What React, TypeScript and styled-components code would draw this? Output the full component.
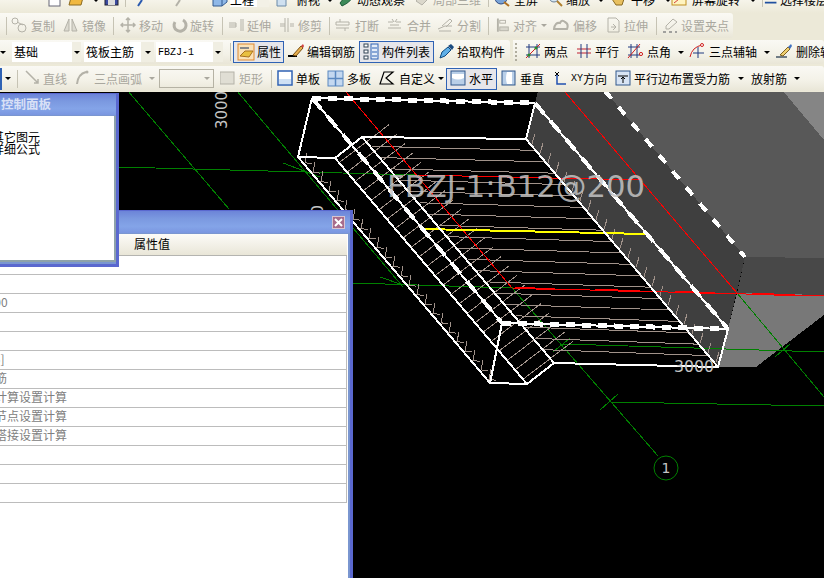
import React from "react";
import styled, { createGlobalStyle } from "styled-components";

const Global = createGlobalStyle`
  html, body { margin: 0; padding: 0; background: #000; overflow: hidden; }
  #root { width: 824px; height: 578px; overflow: hidden; }
  * { box-sizing: border-box; }
`;

const Page = styled.div`
  width: 824px; height: 578px; display: flex; flex-direction: column; overflow: hidden;
  background: #ece9d8;
  font: 12px/1 "Noto Sans CJK SC", "Liberation Sans", sans-serif; color: #000;
`;
const TopRow = styled.div`
  height: 13px; display: flex; align-items: flex-end; overflow: hidden; flex: none; padding-bottom: 6px;
  background: linear-gradient(#f6f4ea, #ece9d8);
`;
const Row = styled.div<{ $h: number; $pb?: number }>`
  height: ${(p) => p.$h}px; display: flex; flex: none; background: #ece9d8; padding-bottom: ${(p) => p.$pb ?? 0}px;
`;
const Band = styled.div<{ $w?: number; $grow?: boolean }>`
  display: flex; align-items: center; height: 100%; flex: ${(p) => (p.$grow ? "1" : "none")};
  ${(p) => (p.$w ? `width: ${p.$w}px;` : "")}
  background: linear-gradient(#faf9f4, #f3f1e7 60%, #e9e6d7);
  border-radius: 0 3px 3px 0; overflow: hidden; white-space: nowrap;
`;
const ToolBox = styled.div<{ $w: number; $dim?: boolean; $top?: boolean }>`
  width: ${(p) => p.$w}px; flex: none; display: flex; align-items: center;
  ${(p) => (p.$top ? "height: 14px;" : "")}
  color: ${(p) => (p.$dim ? "#a9a79e" : "#000")};
`;
const WhiteField = styled.span`
  background: #fff; padding-right: 3px; height: 14px; display: flex; align-items: center; box-shadow: 12px 0 0 #f3f1e6;
`;
const IconSlot = styled.span<{ $w: number }>`
  width: ${(p) => p.$w}px; flex: none; display: flex; align-items: center;
`;
const Pressed = styled.div<{ $w: number; $h: number }>`
  width: ${(p) => p.$w}px; height: ${(p) => p.$h}px; flex: none;
  display: flex; align-items: center; padding-left: 3px;
  border: 1px solid #2f62b4; background: #e6e6ea;
`;
const Sep = styled.div<{ $w: number }>`
  width: ${(p) => p.$w}px; height: 18px; flex: none; border-left: 1px solid #c6c3b4;
`;
const TopSep = styled(Sep)`
  height: 14px;
`;
const Gap = styled.div<{ $w: number }>`
  width: ${(p) => p.$w}px; height: 100%; flex: none;
`;
const Drop = styled.span<{ $dim?: boolean; $ml?: number }>`
  display: inline-block; flex: none; margin-left: ${(p) => p.$ml ?? 5}px; width: 0; height: 0;
  border-left: 3px solid transparent; border-right: 3px solid transparent;
  border-top: 3px solid ${(p) => (p.$dim ? "#a9a79e" : "#000")};
`;
const Combo = styled.div<{ $w: number; $btn: number; $ml: number; $disabled?: boolean; $h?: number }>`
  width: ${(p) => p.$w}px; height: ${(p) => p.$h ?? 20}px; flex: none; margin-left: ${(p) => p.$ml}px;
  display: grid; grid-template-columns: 1fr ${(p) => p.$btn}px; align-items: stretch;
  ${(p) => (p.$disabled ? "border: 1px solid #b5b2a4;" : "")}
`;
const ComboText = styled.div<{ $mono?: boolean }>`
  display: flex; align-items: center; padding-left: 2px; background: #fff;
  ${(p) => (p.$mono ? `font: 10px "Liberation Mono", monospace;` : "")}
`;
const ComboDim = styled.div`
  background: transparent;
`;
const ComboBtn = styled.div<{ $flat?: boolean }>`
  background: ${(p) => (p.$flat ? "transparent" : "#f0eee2")}; display: flex; align-items: center; justify-content: center;
`;
const MonoLabel = styled.span`
  font: 10px "Liberation Mono", monospace;
`;
const Grip = styled.div`
  width: 2px; height: 18px; margin-left: 2px; flex: none;
  background: repeating-linear-gradient(#b0ad9e 0 2px, transparent 2px 4px);
`;
const BlueEdge = styled.div`
  width: 2px; height: 22px; background: #2f62b4; flex: none; margin-right: 3px;
`;

const Canvas = styled.div`
  position: relative; flex: 1; background: #000; overflow: hidden; border-top: 1px solid #ece9d8;
`;
const Drawing = styled.svg`
  display: block; width: 824px; height: 486px;
`;
const Win = styled.div<{ $l: number; $t: number; $w: number; $h: number; $z: number }>`
  position: absolute; left: ${(p) => p.$l}px; top: ${(p) => p.$t}px; width: ${(p) => p.$w}px; height: ${(p) => p.$h}px;
  z-index: ${(p) => p.$z};
  display: flex; flex-direction: column;
  background: #7a96d0;
  border: 1px solid #5a68cf; border-width: 1px 3px 3px 1px;
`;
const TitleBar = styled.div<{ $h: number }>`
  height: ${(p) => p.$h}px; flex: none; display: flex; align-items: center; padding-right: 4px;
  background: linear-gradient(#6c84d8, #7b99e0 35%, #84a4e8 70%, #7a96e0);
`;
const TitleText = styled.div`
  font-size: 12.5px; font-weight: 700; color: #d8e0f6; margin-left: 41px;
`;
const CloseBtn = styled.div`
  width: 13px; height: 13px; margin-left: auto; margin-right: 1px; display: flex; align-items: center; justify-content: center;
  background: #a86c8c; border: 1px solid #d9c4d0;
`;
const SmallBody = styled.div`
  flex: 1; background: #fff; margin: 1px 0 2px 0; padding: 15px 0 0 32px;
  border-right: 2px solid #8ea2aa; border-bottom: 2px solid #8ea2aa;
  font-size: 12px; line-height: 12px; white-space: nowrap;
`;
const BigBody = styled.div`
  flex: 1; background: #fff; margin: 1px 2px 0 0; display: flex; flex-direction: column;
`;
const TableHead = styled.div`
  height: 22px; width: 366px; flex: none; display: flex; align-items: center; padding: 0 0 2px 153px;
  background: linear-gradient(#fcfbf7, #e9e6d8); border-bottom: 1px solid #b4b4b0;
`;
const PropRow = styled.div`
  height: 19px; width: 366px; flex: none; display: flex; align-items: center; padding: 0 0 2px 2px;
  border-bottom: 1px solid #bcbcbc; border-right: 1px solid #bcbcbc; color: #808080;
  white-space: nowrap;
`;

type T = { k: string; w: number; l?: string; i?: string; ig?: number; drop?: number; dim?: boolean };

const s = (d: string, c: string, w = 1) => <path d={d} fill="none" stroke={c} strokeWidth={w} />;

function Icon({ n }: { n: string }) {
  const g = "#b4b2a8";
  const body: Record<string, React.ReactNode> = {
    page: <><rect x="2" y="0" width="11" height="15" fill="#fff" stroke="#667" /></>,
    folder: <><path d="M1 14 L4 3 H16 L13 14Z" fill="#f0b840" stroke="#8a6a20" /></>,
    floppy: <><rect x="1" y="1" width="13" height="13" fill="#3a4aa0" stroke="#223" /><rect x="4" y="8" width="7" height="6" fill="#ddd" /></>,
    undo: <>{s("M2 15 L6 9", "#2a5ab0", 2)}</>,
    redo: <>{s("M10 15 L14 9", "#b4b2a8", 2)}</>,
    cube: <><path d="M1 4 L6 1 H15 V11 L10 15 H1Z" fill="#8fb8e8" stroke="#335a90" />{s("M1 4 H10 V15 M10 4 L15 1", "#335a90")}</>,
    plan: <><path d="M1 7 L6 1 H15 L10 7Z M1 7 H10 V15 H1Z" fill="#cfe0f0" stroke="#6a8aa8" /></>,
    orbit: <><path d="M1 12 Q8 2 15 2 Q14 10 3 15Z" fill="#3c8a58" stroke="#1a5a38" /></>,
    local: <><path d="M2 10 L9 3 L15 7 L8 14Z" fill="#dbd8cc" stroke={g} /></>,
    full: <><circle cx="7" cy="7" r="6" fill="#7aa4d8" stroke="#304a80" /><path d="M10 11 L15 15" stroke="#b07020" strokeWidth="2" /></>,
    zoom: <><circle cx="7" cy="6" r="5" fill="#d8e8f4" stroke="#6a8098" /><path d="M10 10 L15 15" stroke="#b08030" strokeWidth="2" /></>,
    hand: <><path d="M3 3 L7 7 L12 4 L15 8 L13 14 H7 L3 8Z" fill="#e8c060" stroke="#8a6a20" /></>,
    screen: <><rect x="1" y="2" width="14" height="12" fill="#fff4c0" stroke="#c09020" />{s("M3 12 L12 5", "#d04040")}</>,
    floors: <>{s("M1 4 H14 M1 8 H14 M1 12 H14", "#2050a0", 2)}</>,
    copy: <><circle cx="4" cy="4" r="3" fill="none" stroke={g} /><circle cx="11" cy="11" r="4" fill="none" stroke={g} />{s("M6 5 L12 8", g)}</>,
    mirror: <><path d="M1 14 L6 2 V14Z M14 14 L9 2 V14Z" fill="#dcdad0" stroke={g} /></>,
    move: <>{s("M8 1 V15 M1 8 H15 M6 3 L8 1 L10 3 M6 13 L8 15 L10 13 M3 6 L1 8 L3 10 M13 6 L15 8 L13 10", g, 1.5)}</>,
    rotate: <><path d="M3 5 A6 6 0 1 0 11 3" fill="none" stroke={g} strokeWidth="3" /></>,
    extend: <>{s("M1 8 H8 M1 6 H8 V10 H1 M13 2 V14 M15 2 V14", g)}</>,
    trim: <>{s("M6 1 V15 M9 1 V15 M1 7 H6 M11 7 H15 M1 9 H6 M11 9 H15", g)}</>,
    brk: <>{s("M1 5 H14 V8 H1Z M1 11 H14 M5 2 V5 M10 11 V14", g)}</>,
    merge: <>{s("M1 5 H6 M9 5 H14 M1 11 H14 M3 8 H12 M5 2 L7 5 M10 2 L8 5", g)}</>,
    split: <>{s("M1 12 L8 9 H15 M2 14 H14 M5 9 L13 2 L15 4 L9 10", g)}</>,
    align: <>{s("M2 1 V15", g, 2)}<rect x="4" y="3" width="6" height="3" fill="none" stroke={g} /><rect x="4" y="10" width="9" height="4" fill="#d8d6cc" stroke={g} /></>,
    offset: <><path d="M1 12 Q2 5 7 6 Q9 2 12 5 Q16 7 14 12Z" fill="none" stroke={g} strokeWidth="2" /></>,
    stretch: <>{s("M3 1 H11 L14 4 V15 H3Z M6 10 H11 M8 7 L11 10 L8 13", g)}</>,
    grip: <>{s("M11 2 L15 5 L7 12 L4 12 L4 9Z", g)}{s("M1 15 H4 M7 15 H10 M13 15 H15", "#888", 1.5)}</>,
    prop: <><rect x="1" y="1" width="16" height="16" fill="#fbe2b8" stroke="#e08a30" /><rect x="3" y="4" width="9" height="2" fill="#888" /><path d="M3 13 L8 8 L16 8 L12 14Z" fill="#e8c040" stroke="#a87020" /></>,
    rebar: <>{s("M1 13 H10", "#000", 2)}<path d="M6 12 L14 3 L16 5 L9 13Z" fill="#e8b050" stroke="#7a5010" /><path d="M14 3 L16 1 L17 3 L16 5Z" fill="#d04040" /></>,
    list: <><rect x="1" y="1" width="4" height="3" fill="#fff" stroke="#345" /><rect x="1" y="7" width="4" height="3" fill="#fff" stroke="#345" /><rect x="1" y="13" width="4" height="3" fill="#fff" stroke="#345" /><rect x="8" y="1" width="7" height="15" fill="#e4ecf8" stroke="#2f62b4" />{s("M9 5 H14 M9 9 H14 M9 13 H14", "#2f62b4")}</>,
    pick: <><path d="M1 15 L3 9 L9 4 L12 7 L6 13Z" fill="#60b0e8" stroke="#104a80" /><path d="M9 3 L12 1 L15 4 L13 7Z" fill="#1a4a80" /></>,
    two: <>{s("M1 4 H15 M1 12 H15", "#203a80")}{s("M4 1 V15 M12 1 V15", "#203a80")}{s("M1 15 L15 1", "#d02020")}<circle cx="4" cy="12" r="1.6" fill="#2a8a2a" /><circle cx="11" cy="5" r="1.6" fill="#2a8a2a" /></>,
    par: <>{s("M1 6 H15 M1 10 H15", "#c02030")}{s("M5 1 V15 M11 1 V15", "#203a80")}</>,
    angle: <>{s("M1 4 H13 M1 12 H13 M4 1 V15 M10 1 V15", "#203a80")}{s("M1 15 L13 1", "#d02020")}<circle cx="14" cy="11" r="1.6" fill="none" stroke="#d02020" /></>,
    arc3: <>{s("M1 14 Q3 4 13 2", "#d02020")}{s("M9 4 V15 M4 10 H15", "#203a80")}<circle cx="13" cy="2" r="1.5" fill="#fff" stroke="#d02020" /></>,
    del: <>{s("M1 14 H12", "#456", 1.5)}<path d="M5 12 L13 4 L15 6 L8 13Z" fill="#f0d070" stroke="#806020" /><path d="M13 4 L16 1 L17 3 L15 6Z" fill="#4070c0" /></>,
    line: <>{s("M1 1 L13 13 M9 13 H13 V9", g, 1.5)}</>,
    arc: <>{s("M2 14 Q3 4 11 2", g, 2)}<circle cx="12" cy="2" r="1.5" fill={g} /></>,
    rect: <><rect x="0" y="2" width="14" height="12" fill="#e0ded4" stroke={g} /></>,
    slab: <><rect x="1" y="1" width="14" height="14" fill="#fff" stroke="#2f62b4" strokeWidth="1.5" /><rect x="2" y="9" width="12" height="5" fill="#cfe0f4" /></>,
    multi: <><rect x="1" y="1" width="15" height="15" fill="#c4d8f0" stroke="#5a88c0" />{s("M8.5 1 V16 M1 8.5 H16", "#5a88c0", 1.5)}</>,
    custom: <>{s("M1 14 L5 2 H14 L7 8 L14 14Z", "#000", 1.2)}</>,
    horz: <><rect x="1" y="1" width="14" height="14" fill="#b9cfe8" stroke="#32588c" /><path d="M2 8 Q8 11 14 8 V4 H2Z" fill="#fff" /></>,
    vert: <><rect x="1" y="1" width="13" height="14" fill="#b9cfe8" stroke="#32588c" /><path d="M6 2 Q4 8 6 14 H11 V2Z" fill="#fff" /></>,
    xy: <>{s("M5 4 V14 H14", "#2050b0", 1.5)}{s("M3 2 L7 6 M7 2 L3 6", "#000")}</>,
    parLay: <><rect x="1" y="1" width="14" height="14" fill="#d8e4f4" stroke="#32588c" />{s("M3 6 H13 M8 13 V7 M6 9 L8 7 L10 9", "#000")}</>,
  };
  return <svg width="18" height="18" viewBox="0 0 18 18">{body[n]}</svg>;
}

function Tool({ t, top }: { t: T; top?: boolean }) {
  return (
    <ToolBox $w={t.w} $dim={t.dim} $top={top}>
      {t.i && <IconSlot $w={t.ig ?? 20}><Icon n={t.i} /></IconSlot>}
      {t.l && <span>{t.l}</span>}
      {t.drop !== undefined && <Drop $dim={t.dim} $ml={t.drop} />}
    </ToolBox>
  );
}

const row1: T[] = [
  { k: "g", w: 47 }, { k: "a", w: 21, i: "page" }, { k: "b", w: 36, i: "folder", drop: 5 },
  { k: "c", w: 21, i: "floppy" },
];
const row1b: T[] = [
  { k: "n", w: 53, i: "full", l: "全屏" }, { k: "o", w: 62, i: "zoom", ig: 19, l: "缩放", drop: 8 },
  { k: "p", w: 62, i: "hand", ig: 22, l: "平移", drop: 10 }, { k: "q", w: 91, i: "screen", ig: 21, l: "屏幕旋转", drop: 10 },
];

const r2 = (k: string, w: number, i: string, l: string, ig = 20, drop?: number): T => ({ k, w, i, l, ig, drop, dim: true });

export default function App() {
  return (
    <Page>
      <Global />
      <TopRow>
        {row1.map((t) => <Tool key={t.k} t={t} top />)}
        <TopSep $w={11} />
        <Tool t={{ k: "u", w: 30, i: "undo" }} top />
        <Tool t={{ k: "v", w: 46, i: "redo" }} top />
        <ToolBox $w={64} $top><IconSlot $w={18}><Icon n="cube" /></IconSlot><WhiteField>工程</WhiteField></ToolBox>
        <Tool t={{ k: "h", w: 63, i: "plan", l: "俯视", drop: 7 }} top />
        <Tool t={{ k: "j", w: 75, i: "orbit", ig: 18, l: "动态观察" }} top />
        <Tool t={{ k: "m", w: 74, i: "local", ig: 19, l: "局部三维", dim: true }} top />
        <TopSep $w={6} />
        {row1b.map((t) => <Tool key={t.k} t={t} top />)}
        <TopSep $w={2} />
        <Tool t={{ k: "r", w: 70, i: "floors", ig: 16, l: "选择楼层" }} top />
      </TopRow>

      <Row $h={27} $pb={2}>
        <Band $w={733}>
          <Gap $w={6} /><Sep $w={5} />
          <Tool t={r2("a", 52, "copy", "复制")} />
          <Tool t={r2("b", 50, "mirror", "镜像", 19)} />
          <Sep $w={7} />
          <Tool t={r2("c", 52, "move", "移动", 19)} />
          <Tool t={r2("d", 50, "rotate", "旋转", 18)} />
          <Sep $w={6} />
          <Tool t={r2("e", 51, "extend", "延伸", 19)} />
          <Tool t={r2("f", 50, "trim", "修剪", 19)} />
          <Sep $w={6} />
          <Tool t={r2("g", 52, "brk", "打断")} />
          <Tool t={r2("h", 50, "merge", "合并")} />
          <Tool t={r2("i", 51, "split", "分割")} />
          <Sep $w={8} />
          <Tool t={r2("j", 57, "align", "对齐", 17, 4)} />
          <Tool t={r2("k", 52, "offset", "偏移")} />
          <Tool t={r2("l", 51, "stretch", "拉伸", 19)} />
          <Sep $w={6} />
          <Tool t={r2("m", 71, "grip", "设置夹点", 19)} />
        </Band>
      </Row>

      <Row $h={26} $pb={2}>
        <Band $w={510}>
          <Drop $ml={0} /><Gap $w={6} />
          <Combo $w={69} $btn={9} $ml={0}><ComboText>基础</ComboText><ComboBtn><Drop $ml={0} /></ComboBtn></Combo>
          <Combo $w={70} $btn={13} $ml={3}><ComboText>筏板主筋</ComboText><ComboBtn><Drop $ml={0} /></ComboBtn></Combo>
          <Combo $w={67} $btn={10} $ml={2}><ComboText $mono>FBZJ-1</ComboText><ComboBtn><Drop $ml={0} /></ComboBtn></Combo>
          <Gap $w={7} /><Sep $w={3} />
          <Pressed $w={51} $h={22}><Tool t={{ k: "p", w: 46, i: "prop", ig: 20, l: "属性" }} /></Pressed>
          <Gap $w={3} />
          <Tool t={{ k: "q", w: 72, i: "rebar", l: "编辑钢筋" }} />
          <Pressed $w={75} $h={22}><Tool t={{ k: "s", w: 70, i: "list", ig: 19, l: "构件列表" }} /></Pressed>
          <Gap $w={5} />
          <Tool t={{ k: "t", w: 71, i: "pick", ig: 18, l: "拾取构件" }} />
        </Band>
        <Gap $w={3} />
        <Band $grow>
          <Grip /><Gap $w={8} />
          <Tool t={{ k: "a", w: 51, i: "two", ig: 19, l: "两点" }} />
          <Tool t={{ k: "b", w: 51, i: "par", ig: 19, l: "平行" }} />
          <Tool t={{ k: "c", w: 62, i: "angle", l: "点角", drop: 7 }} />
          <Tool t={{ k: "d", w: 86, i: "arc3", l: "三点辅轴", drop: 7 }} />
          <Tool t={{ k: "e", w: 60, i: "del", ig: 21, l: "删除辅轴" }} />
        </Band>
      </Row>

      <Row $h={25}>
        <Band $grow>
          <BlueEdge /><Drop $ml={0} /><Gap $w={6} /><Sep $w={8} />
          <Tool t={r2("a", 50, "line", "直线", 18)} />
          <Tool t={r2("b", 84, "arc", "三点画弧", 19, 7)} />
          <Combo $w={55} $h={19} $btn={12} $ml={0} $disabled><ComboDim /><ComboBtn $flat><Drop $dim $ml={0} /></ComboBtn></Combo>
          <Gap $w={6} />
          <Tool t={r2("c", 51, "rect", "矩形", 19)} />
          <Sep $w={6} />
          <Tool t={{ k: "d", w: 50, i: "slab", ig: 19, l: "单板" }} />
          <Tool t={{ k: "e", w: 52, i: "multi", l: "多板" }} />
          <Tool t={{ k: "f", w: 67, i: "custom", l: "自定义", drop: 3 }} />
          <Pressed $w={51} $h={22}><Tool t={{ k: "g", w: 46, i: "horz", ig: 19, l: "水平" }} /></Pressed>
          <Gap $w={4} />
          <Tool t={{ k: "h", w: 51, i: "vert", ig: 19, l: "垂直" }} />
          <ToolBox $w={63}><IconSlot $w={19}><Icon n="xy" /></IconSlot><MonoLabel>XY</MonoLabel><span>方向</span></ToolBox>
          <Tool t={{ k: "j", w: 136, i: "parLay", ig: 19, l: "平行边布置受力筋", drop: 8 }} />
          <Tool t={{ k: "k", w: 50, l: "放射筋", drop: 7 }} />
        </Band>
      </Row>

      <Canvas>
        <CadDrawing />
        <Win $l={-41} $t={1} $w={160} $h={174} $z={2}>
          <TitleBar $h={21}><TitleText>控制面板</TitleText></TitleBar>
          <SmallBody>其它图元<br />详细公式</SmallBody>
        </Win>
        <Win $l={-20} $t={118} $w={373} $h={400} $z={1}>
          <TitleBar $h={22}>
            <CloseBtn>
              <svg width="9" height="9" viewBox="0 0 9 9"><path d="M1 1 L8 8 M8 1 L1 8" stroke="#fff" strokeWidth="2" /></svg>
            </CloseBtn>
          </TitleBar>
          <BigBody>
            <TableHead>属性值</TableHead>
            <PropRow />
            <PropRow />
            <PropRow>@00</PropRow>
            <PropRow />
            <PropRow />
            <PropRow>[35]</PropRow>
            <PropRow>底筋</PropRow>
            <PropRow>按计算设置计算</PropRow>
            <PropRow>按节点设置计算</PropRow>
            <PropRow>按搭接设置计算</PropRow>
            <PropRow />
            <PropRow />
            <PropRow />
          </BigBody>
        </Win>
      </Canvas>
    </Page>
  );
}

function lerp(a: number[], b: number[], t: number) {
  return [a[0] + (b[0] - a[0]) * t, a[1] + (b[1] - a[1]) * t];
}

function CadDrawing() {
  const tan = "#a0928a";
  const green = "#008000";
  const hatch: string[] = [];
  const ties: string[] = [];
  const lticks: string[] = [];
  const rticks: string[] = [];
  for (let i = 1; i < 20; i++) {
    const t = i / 20;
    const a = lerp([362, 137], [554, 363], t);
    const b = lerp([526, 139], [718, 367], t);
    hatch.push(`M${a[0]} ${a[1] - 2} L${b[0]} ${b[1]}`);
  }
  for (let i = 0; i < 24; i++) {
    const t = (i + 0.5) / 24;
    const p = lerp([335, 158], [527, 384], t);
    ties.push(`M${p[0]} ${p[1]} L${p[0] + 50} ${p[1] - 38}`);
    const q = lerp([298, 157], [490, 383], t);
    lticks.push(`M${q[0] + 5} ${q[1] - 9} L${q[0] + 3} ${q[1] + 1} L${q[0] + 10} ${q[1] + 2}`);
    const r = lerp([526, 139], [718, 367], t);
    rticks.push(`M${r[0] + 2} ${r[1]} L${r[0] + 5} ${r[1] - 10}`);
  }
  return (
    <Drawing viewBox="0 92 824 486">
      <g shapeRendering="crispEdges">
        <polygon points="783,91 824,91 824,140" fill="#858585" />
        <polygon points="605,91 783,91 824,140 824,258 745,257" fill="#585858" />
        <polygon points="538,91 605,91 745,257 728,329 718,366 526,139" fill="#3f3f3f" />
        <polygon points="745,257 824,258 824,295 737,293" fill="#484848" />
        <polygon points="737,293 824,295 824,315 756,367 718,367 728,329" fill="#787878" />

        <g fill="none" stroke={green} strokeWidth="1">
          <path d="M128 91 L229 209" />
          <path d="M237 91 L403 287" />
          <path d="M118 167 L417 175" />
          <path d="M283 163 L320 177" />
          <path d="M353 283 L513 288" />
          <path d="M380 277 L403 285" />
          <path d="M512 288 L658 456" />
          <path d="M737 293 L824 397" />
          <path d="M563 344 L824 352" />
          <path d="M553 352 L570 338" />
          <path d="M775 357 L790 344" />
          <path d="M610 402 L824 406" />
          <path d="M600 410 L618 394" />
        </g>

        <g fill="none" stroke={tan} strokeWidth="1">
          <path d={hatch.join(" ")} />
          <path d={ties.join(" ")} />
          <path d={lticks.join(" ")} />
          <path d={rticks.join(" ")} />
        </g>

        <g fill="none" stroke="#ff0000">
          <path d="M346 92 L512 288" />
          <path d="M565 92 L737 293" />
          <path d="M417 175 L642 180" />
          <path d="M512 288 L824 296" />
          <path d="M515 288 L555 289 M595 290 L640 291 M675 292 L715 293 M752 294 L795 295" strokeWidth="2" />
        </g>

        <path d="M420 226 L423 229 L646 234" fill="none" stroke="#ffff00" strokeWidth="2" />

        <g fill="none" stroke="#fff">
          <path d="M312 98 L298 157 L335 158 L362 137 L526 139 L535 103" strokeWidth="2" />
          <path d="M298 157 L490 383 L527 384 L554 363 L718 367 L728 329" strokeWidth="2" />
          <path d="M335 158 L527 384" strokeWidth="2" />
          <path d="M362 137 L554 363" strokeWidth="2" />
          <path d="M526 139 L718 367" strokeWidth="2" />
          <path d="M502 323 L490 383" strokeWidth="2" />
          <path d="M312 98 L535 103" strokeWidth="2" />
          <path d="M312 98 L535 103" strokeWidth="5" strokeDasharray="9 7" />
          <path d="M502 323 L728 329" strokeWidth="2" />
          <path d="M502 323 L728 329" strokeWidth="5" strokeDasharray="9 7" />
          <path d="M312 98 L502 323" strokeWidth="2" />
          <path d="M312 98 L502 323" strokeWidth="4" strokeDasharray="14 10" />
          <path d="M535 103 L728 329" strokeWidth="2" />
          <path d="M535 103 L728 329" strokeWidth="4" strokeDasharray="14 10" />
          <path d="M605 91 L745 257" strokeWidth="4" strokeDasharray="10 11" />
        </g>
      </g>

      <circle cx="666" cy="468" r="12" fill="none" stroke={green} />
      <g fill="#c4c4c4" fontFamily="'DejaVu Sans', sans-serif">
        <text x="387" y="197" fontSize="31" textLength="258" lengthAdjust="spacingAndGlyphs" fillOpacity="0.85">FBZJ-1:B12@200</text>
        <text x="674" y="372" fontSize="16" textLength="40" lengthAdjust="spacingAndGlyphs">3000</text>
        <text transform="translate(227 129) rotate(-90)" fontSize="16" textLength="38" lengthAdjust="spacingAndGlyphs">3000</text>
        <text transform="translate(323 245) rotate(-90)" fontSize="16" textLength="40" lengthAdjust="spacingAndGlyphs">3000</text>
        <text x="666" y="473" fontSize="14" textAnchor="middle">1</text>
      </g>
    </Drawing>
  );
}
